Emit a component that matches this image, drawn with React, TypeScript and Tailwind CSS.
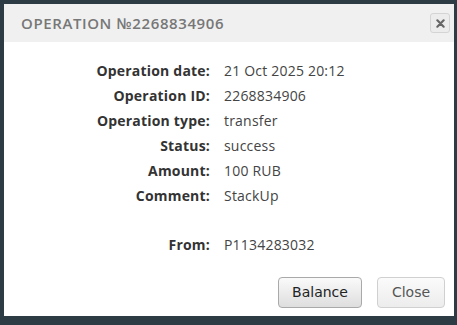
import React from 'react';

const rows: [string, string][] = [
  ['Operation date:', '21 Oct 2025 20:12'],
  ['Operation ID:', '2268834906'],
  ['Operation type:', 'transfer'],
  ['Status:', 'success'],
  ['Amount:', '100 RUB'],
  ['Comment:', 'StackUp'],
];

export default function App() {
  return (
    <div className="w-[457px] h-[325px] bg-[#2d3b44] p-[4px] pr-[3px] pb-[9px]">
      <div className="h-full bg-white flex flex-col font-['Open_Sans',sans-serif]">
        <div className="h-[38px] bg-[#f0f0f0] flex items-center pl-[17px] pr-[3px]">
          <div className="flex-1 text-[15px] tracking-[0.6px] text-[#777] font-semibold">
            OPERATION №2268834906
          </div>
          <button className="w-[20px] h-[20px] mr-[1px] border border-[#d4d4d4] rounded-[3px] bg-[#ececec] flex items-center justify-center text-[#666]">
            <svg width="9" height="9" viewBox="0 0 10 10">
              <path d="M1.5 1.5 L8.5 8.5 M8.5 1.5 L1.5 8.5" stroke="currentColor" strokeWidth="2.4" strokeLinecap="round" />
            </svg>
          </button>
        </div>
        <div className="flex-1 pt-[17px] text-[14px] leading-[24.9px] tracking-[0.2px]">
          {rows.map(([k, v]) => (
            <div key={k} className="flex">
              <div className="w-[206px] text-right font-bold text-[#333]">{k}</div>
              <div className="pl-[14px] text-[#444]">{v}</div>
            </div>
          ))}
          <div className="h-[24.9px]" />
          <div className="flex">
            <div className="w-[206px] text-right font-bold text-[#333]">From:</div>
            <div className="pl-[14px] text-[#444]">P1134283032</div>
          </div>
        </div>
        <div className="flex justify-end gap-[15px] pr-[9px] pb-[8px] font-['DejaVu_Sans',sans-serif] text-[14px]">
          <button className="w-[84px] h-[31px] rounded-[4px] border border-[#a9a9a9] bg-gradient-to-b from-[#fafafa] to-[#dedede] text-[#222]">
            Balance
          </button>
          <button className="w-[68px] h-[31px] rounded-[4px] border border-[#d0d0d0] bg-gradient-to-b from-[#fbfbfb] to-[#ececec] text-[#555]">
            Close
          </button>
        </div>
      </div>
    </div>
  );
}
